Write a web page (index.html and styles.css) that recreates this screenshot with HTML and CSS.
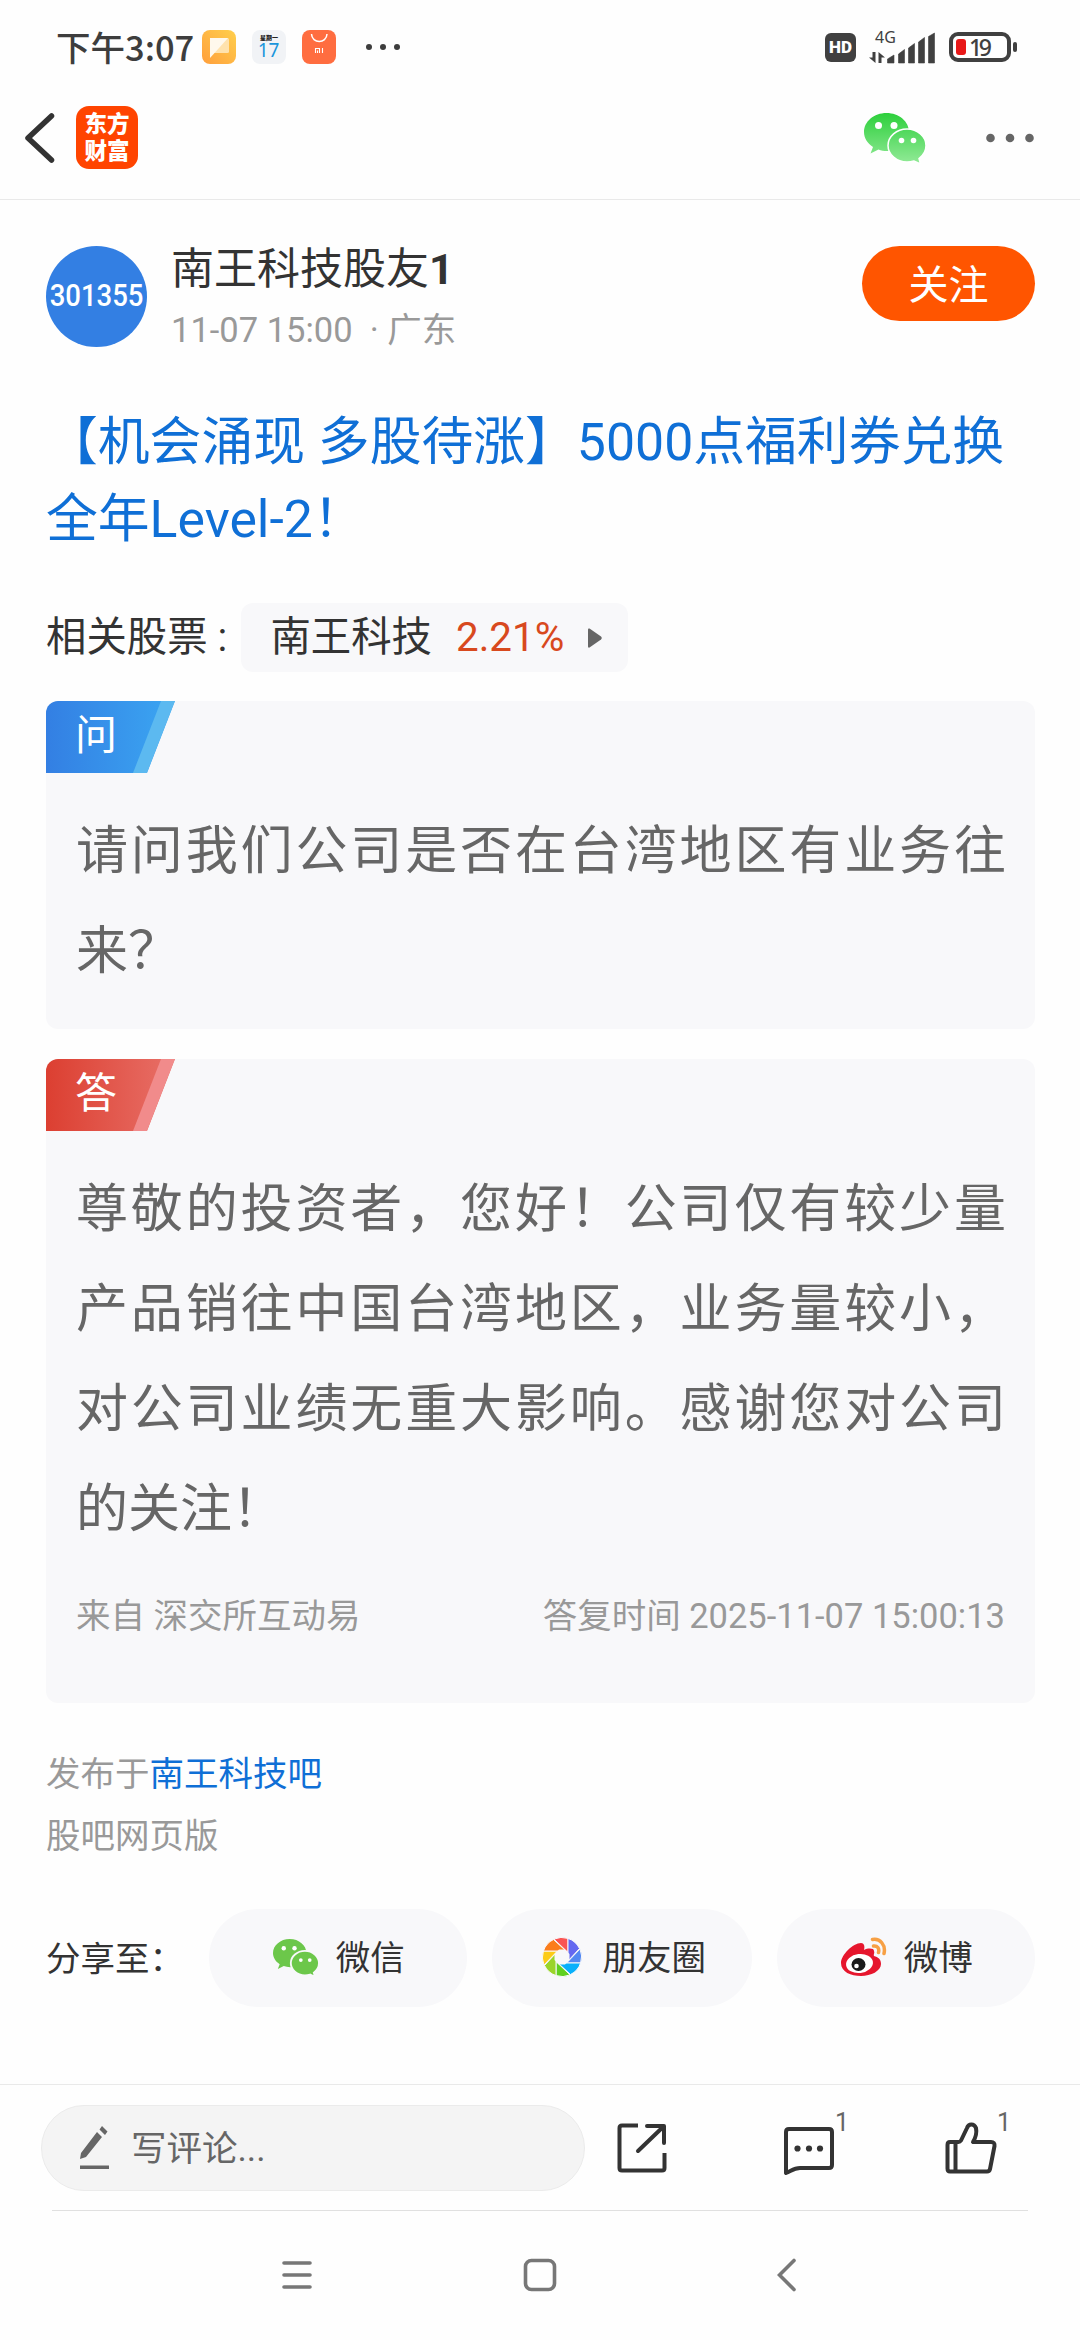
FILE: index.html
```html
<!DOCTYPE html>
<html lang="zh-CN">
<head>
    <meta charset="UTF-8">
    <title>南王科技吧</title>
    <link rel="stylesheet" href="styles.css">
</head>
<body>

    <!-- status bar -->
    <div class="status-bar">
        <span class="time">下午3:07</span>
        <div class="app-icons">
            <svg width="34" height="34" viewBox="0 0 34 34">
                <defs><linearGradient id="note" x1="0" y1="1" x2="1" y2="0"><stop offset="0" stop-color="#ff9f3c"/><stop offset="1" stop-color="#ffcf4c"/></linearGradient></defs>
                <rect width="34" height="34" rx="8" fill="url(#note)"/>
                <rect x="8" y="8" width="19" height="15" rx="1.5" fill="#ffe2ad"/>
                <path d="M8 8H26L8 28Z" fill="#fff8ec"/>
            </svg>
            <svg width="34" height="34" viewBox="0 0 34 34">
                <rect width="34" height="34" rx="8" fill="#f1f3f6"/>
                <text x="17" y="10" class="cal-week">星期一</text>
                <text x="16.5" y="27" class="cal-day">17</text>
            </svg>
            <svg width="34" height="34" viewBox="0 0 34 34">
                <rect width="34" height="34" rx="8" fill="#ff6d40"/>
                <path d="M9.5 4C10 14 24.5 14 25 4" fill="none" stroke="#fff" stroke-width="1.5"/>
                <path d="M13.5 23V18.5H17.5V23M15.5 20.5V23M20.5 18V23" fill="none" stroke="#fff" stroke-width="1.1"/>
            </svg>
        </div>
        <svg class="status-dots" width="36" height="8" viewBox="0 0 36 8" fill="#3d3d3d"><circle cx="4" cy="4" r="3"/><circle cx="18" cy="4" r="3"/><circle cx="32" cy="4" r="3"/></svg>
        <div class="status-right">
            <span class="hd">HD</span>
            <svg width="67" height="38" viewBox="0 0 67 38" fill="#404040">
                <text x="6" y="14.5" class="net">4G</text>
                <path d="M6.5 24V35L0 29.5H3.5V24ZM9.500 35V24L16 29.500H12.500V35Z"/>
                <path d="M18.500 35V31L25 27V35ZM29.500 35V26L35.500 21.500V35ZM39.500 35V20L45.500 15.500V35ZM49.500 35V14L55.500 9.500V35ZM59.500 35V8.500L65.500 5V35Z" stroke="#404040" stroke-width=".6" stroke-linejoin="round"/>
            </svg>
            <svg width="68" height="32" viewBox="0 0 68 32">
                <rect x="2" y="3" width="58" height="26" rx="7" fill="none" stroke="#404040" stroke-width="4"/>
                <rect x="7" y="8" width="10" height="16" rx="3" fill="#e81818"/>
                <rect x="64" y="11" width="4" height="10" rx="2" fill="#404040"/>
                <text x="20" y="24.5" class="battery-num" textLength="23">19</text>
            </svg>
        </div>
    </div>

    <!-- top bar -->
    <header class="top-bar">
        <svg class="back" width="30" height="52" viewBox="0 0 30 52" fill="none" stroke="#333" stroke-width="5.5" stroke-linecap="round" stroke-linejoin="round"><path d="M26.5 4L3 26L26.5 48"/></svg>
        <div class="logo"><span>东方</span><span>财富</span></div>
        <svg class="wechat-top" width="62" height="52" viewBox="0 0 62 52">
            <defs><linearGradient id="wx" gradientUnits="userSpaceOnUse" x1="0" y1="0" x2="0" y2="52"><stop offset="0" stop-color="#2bcf3a"/><stop offset="1" stop-color="#93ea98"/></linearGradient></defs>
            <path d="M22.5 1C10 1 0 9.5 0 20C0 26 3.5 31.5 9 35L6.5 41.5L14.5 37.5C17 38.5 20 39 23 39C35 39 45 30.5 45 20S35 1 22.5 1Z" fill="url(#wx)"/>
            <path d="M43 17C32.500 17 24 24.500 24 33.500S32.500 50 43 50C45.500 50 47.500 49.700 50 49L56.500 52L55 46.500C59 43.500 62 39 62 33.500C62 24.500 53.500 17 43 17Z" fill="url(#wx)" stroke="#fff" stroke-width="1.5"/>
            <g fill="#fff"><circle cx="14.5" cy="13.5" r="3.5"/><circle cx="30" cy="13.5" r="3.5"/><circle cx="37.5" cy="28.5" r="2.8"/><circle cx="49.5" cy="28.5" r="2.8"/></g>
        </svg>
        <svg width="48" height="10" viewBox="0 0 48 10" fill="#666"><circle cx="4.5" cy="5" r="4.3"/><circle cx="24" cy="5" r="4.3"/><circle cx="43.5" cy="5" r="4.3"/></svg>
    </header>

    <main class="post">
        <div class="author">
            <div class="avatar"><span>301355</span></div>
            <div class="author-info">
                <div class="name">南王科技股友<b>1</b></div>
                <div class="meta">11-07 15:00 &nbsp;· 广东</div>
            </div>
            <button class="follow">关注</button>
        </div>

        <h1 class="title">【机会涌现 多股待涨】5000点福利券兑换全年Level-2！</h1>

        <div class="stocks">
            <span>相关股票 :</span>
            <div class="stock">
                <span>南王科技</span>
                <span class="rate">2.21%</span>
                <svg width="14" height="20" viewBox="0 0 14 20"><path d="M0 1.500Q0 0 1.500 .5L13 8.500Q14.500 10 13 11.500L1.500 19.500Q0 20 0 18.500Z" fill="#666"/></svg>
            </div>
        </div>

        <section class="card">
            <div class="tag ask"><span>问</span></div>
            <p>请问我们公司是否在台湾地区有业务往来？</p>
        </section>

        <section class="card answer-card">
            <div class="tag answer"><span>答</span></div>
            <p>尊敬的投资者，您好！公司仅有较少量产品销往中国台湾地区，业务量较小，对公司业绩无重大影响。感谢您对公司的关注！</p>
            <div class="source">
                <span>来自 深交所互动易</span>
                <span>答复时间 2025-11-07 15:00:13</span>
            </div>
        </section>

        <div class="from">
            <div>发布于<a>南王科技吧</a></div>
            <div>股吧网页版</div>
        </div>

        <div class="share">
            <span class="share-label">分享至：</span>
            <div class="share-btn">
                <svg width="46" height="39" viewBox="0 0 62 52">
                    <path d="M22.5 1C10 1 0 9.5 0 20C0 26 3.5 31.5 9 35L6.5 41.5L14.5 37.5C17 38.5 20 39 23 39C35 39 45 30.5 45 20S35 1 22.5 1Z" fill="#6cc74a"/>
                    <path d="M43 17C32.500 17 24 24.500 24 33.500S32.500 50 43 50C45.500 50 47.500 49.700 50 49L56.500 52L55 46.500C59 43.500 62 39 62 33.500C62 24.500 53.500 17 43 17Z" fill="#6cc74a" stroke="#f8f8fa" stroke-width="2.5"/>
                    <g fill="#fff"><circle cx="14.5" cy="13.5" r="3"/><circle cx="29" cy="13.5" r="3"/><circle cx="37.5" cy="29.5" r="2.5"/><circle cx="49.5" cy="29.5" r="2.5"/></g>
                </svg>
                <span>微信</span>
            </div>
            <div class="share-btn moments">
                <svg width="40" height="40" viewBox="-20 -20 40 40">
                    <g stroke="#f8f8fa" stroke-width="1">
                        <path d="M-8 -17.900A19.500 19.500 0 0 1 6 -18.600V-4.500Z" fill="#fa5452"/>
                        <path d="M6 -18.600A19.500 19.500 0 0 1 17.500 -8.500L6 4Z" fill="#6468f0"/>
                        <path d="M18 -8A19.500 19.500 0 0 1 18.600 6H4.500Z" fill="#5288f2"/>
                        <path d="M18.600 6A19.500 19.500 0 0 1 8.500 17.500L-4 6Z" fill="#08b0fb"/>
                        <path d="M8 17.900A19.500 19.500 0 0 1 -6 18.600V4.500Z" fill="#60d020"/>
                        <path d="M-6 18.600A19.500 19.500 0 0 1 -17.500 8.500L-6 -4Z" fill="#9ad42a"/>
                        <path d="M-18 8A19.500 19.500 0 0 1 -18.600 -6H-4.500Z" fill="#fccb17"/>
                        <path d="M-18.600 -6A19.500 19.500 0 0 1 -8.500 -17.500L4 -6Z" fill="#fb7d1c"/>
                    </g>
                    <path d="M-3 -7.500H3L7.500 -3V3L3 7.500H-3L-7.500 3V-3Z" fill="#f8f8fa"/>
                </svg>
                <span>朋友圈</span>
            </div>
            <div class="share-btn">
                <svg width="46" height="40" viewBox="0 0 46 40">
                    <path d="M20 6C23 6 24 9 23 13C27 11 33 11 33 14C34 16 32 18 33 19C37 20 40 22 40 27C40 34 30 39 20 39S0 35 0 26C0 18 12 6 20 6Z" fill="#e6162d"/>
                    <ellipse cx="18.5" cy="26.5" rx="13.5" ry="9.5" transform="rotate(-7 18.5 26.5)" fill="#fff"/>
                    <ellipse cx="17.5" cy="27.5" rx="7" ry="6.5" fill="#1b1b1b"/>
                    <circle cx="15.5" cy="29" r="2.3" fill="#fff"/>
                    <path d="M31.5 2.5C39 1 45 8 43 16.5M32.5 9C36.5 8.5 38.5 11.5 37.5 15.5" fill="none" stroke="#f7a044" stroke-width="3.5" stroke-linecap="round"/>
                </svg>
                <span>微博</span>
            </div>
        </div>
    </main>

    <!-- comment bar -->
    <footer class="comment-bar">
        <div class="comment-input">
            <svg width="30" height="46" viewBox="0 0 30 46" fill="#666"><path d="M0 35L1 29L17 8L22 13L6 33ZM19.500 5.500L22 2L27.500 7.500L25 11ZM0 41.500H29V45H0Z"/></svg>
            <span>写评论...</span>
        </div>
        <div class="actions">
            <svg width="50" height="50" viewBox="0 0 50 50" fill="none" stroke="#333" stroke-width="4"><path d="M21 2.500H5Q2.500 2.500 2.500 5V45Q2.500 47.500 5 47.500H45Q47.500 47.500 47.500 45V30"/><path d="M30 3H47V20M46 4L21 28" stroke-linecap="round" stroke-linejoin="round"/></svg>
            <div class="action comment">
                <svg width="52" height="54" viewBox="0 -5 52 54"><path d="M6 3H46Q49 3 49 6V39Q49 42 46 42H17C11 42 8 45 3 47V6Q3 3 6 3Z" fill="none" stroke="#333" stroke-width="4" stroke-linejoin="round"/><g fill="#333"><circle cx="14.5" cy="22.5" r="3.1"/><circle cx="26" cy="22.5" r="3.1"/><circle cx="37" cy="22.5" r="3.1"/></g></svg>
                <span class="count">1</span>
            </div>
            <div class="action like">
                <svg width="52" height="54" viewBox="0 0 52 54" fill="none" stroke="#333" stroke-width="4" stroke-linejoin="round"><path d="M5 21H13.500Q15 21 16 19.500L22 7C23.500 2.500 29 2 31 7C32 12 31 16 28 21H46Q50 21 49.500 25L45 48Q44.500 50.500 42 50.500H5Q2.500 50.500 2.500 47.500V24Q2.500 21 5 21ZM10.500 21V50"/></svg>
                <span class="count">1</span>
            </div>
        </div>
    </footer>

    <!-- system navigation -->
    <nav class="sys-nav">
        <svg width="30" height="32" viewBox="0 0 30 32" stroke="#777" stroke-width="3.6" stroke-linecap="round"><path d="M2 4H28M2 16H28M2 28H28"/></svg>
        <svg class="home" width="34" height="34" viewBox="0 0 34 34"><rect x="2.5" y="2.5" width="29" height="29" rx="6" fill="none" stroke="#777" stroke-width="3.6"/></svg>
        <svg width="20" height="34" viewBox="0 0 20 34" fill="none" stroke="#777" stroke-width="3.6" stroke-linecap="round"><path d="M17 2.500L2.500 17L17 31.500"/></svg>
    </nav>

</body>
</html>
```

FILE: styles.css
```css
* {
    box-sizing: border-box;
}

body {
    margin: 0;
    width: 1080px;
    height: 2340px;
    overflow: hidden;
    display: flex;
    flex-direction: column;
    background-color: #fefefe;
    color: #333;
    font-family: Roboto, "Noto Sans CJK SC", sans-serif;
}

svg {
    display: block;
    flex: none;
}

/* status bar */
.status-bar {
    height: 94px;
    padding: 0 63px 0 56px;
    display: flex;
    align-items: center;
    flex: none;
}

.time {
    width: 146px;
    padding-bottom: 2px;
    font: 500 34.5px/40px "Noto Sans CJK SC", sans-serif;
    color: #3d3d3d;
    white-space: nowrap;
}

.app-icons {
    display: flex;
    gap: 16px;
}

.cal-week {
    font: 900 6px "Noto Sans CJK SC", sans-serif;
    text-anchor: middle;
    fill: #222;
}

.cal-day {
    font: 19px "Noto Sans", sans-serif;
    text-anchor: middle;
    fill: #1a96dc;
}

.status-dots {
    margin-left: 29px;
}

.status-right {
    margin-left: auto;
    display: flex;
    align-items: center;
}

.hd {
    width: 31px;
    height: 29px;
    margin-right: 13px;
    border-radius: 6px;
    background: #404040;
    color: #fff;
    font: 900 17px/29px Roboto, sans-serif;
    text-align: center;
}

.net {
    font: 16px "Noto Sans", sans-serif;
}

.battery-num {
    font: 500 23px "Noto Sans", sans-serif;
    fill: #404040;
}

.status-right svg + svg {
    margin-left: 13px;
}

/* top bar */
.top-bar {
    height: 106px;
    padding: 0 46px 18px 25px;
    display: flex;
    align-items: center;
    border-bottom: 1px solid #e9e9e9;
    flex: none;
}

.logo {
    width: 62px;
    height: 63px;
    margin-left: 21px;
    padding-bottom: 4px;
    border-radius: 13px;
    background: #ff4400;
    color: #fff;
    display: flex;
    flex-direction: column;
    align-items: center;
    justify-content: center;
    font: 900 22.5px/27px "Noto Sans CJK SC", sans-serif;
}

.wechat-top {
    margin-left: auto;
    margin-right: 60px;
}

/* post */
.post {
    flex: 1;
    padding: 46px 45px 0 46px;
}

.author {
    height: 102px;
    display: flex;
    align-items: flex-start;
}

.avatar {
    width: 101px;
    height: 101px;
    border-radius: 50%;
    background: #337fe3;
    color: #fff;
    display: flex;
    align-items: center;
    justify-content: center;
    font: 500 32px/1 Roboto, sans-serif;
    padding-bottom: 4px;
}

/* the stock code is set narrow inside the circle */
.avatar span {
    transform: scaleX(.86);
}

.author-info {
    margin-left: 24px;
    padding-top: 1px;
}

.name {
    height: 60px;
    font-size: 43px;
    line-height: 44px;
}

.meta {
    font-size: 34.5px;
    line-height: 46px;
    color: #999;
}

.follow {
    margin-left: auto;
    width: 173px;
    height: 75px;
    padding: 0 0 4px;
    border: none;
    border-radius: 38px;
    background: #ff5500;
    color: #fff;
    font-family: inherit;
    font-size: 40px;
}

.title {
    margin: 56px 0 0;
    font-size: 51.8px;
    font-weight: 400;
    line-height: 77px;
    color: #0f6fd6;
}

.stocks {
    height: 69px;
    margin-top: 45px;
    display: flex;
    align-items: center;
    gap: 14px;
    font-size: 40.4px;
    line-height: 67px;
}

.stock {
    width: 387px;
    height: 69px;
    padding-left: 29px;
    border-radius: 12px;
    background: #f8f8fa;
    display: flex;
    align-items: center;
    gap: 24px;
}

.rate {
    color: #d8491e;
}

/* question and answer cards */
.card {
    height: 328px;
    margin-top: 29px;
    border-radius: 12px;
    background: #f8f8fa;
    overflow: hidden;
}

.tag {
    width: 129px;
    height: 72px;
    padding-left: 29px;
    display: flex;
    color: #fff;
    font-size: 42px;
    line-height: 69px;
    clip-path: polygon(0 0, 100% 0, 101px 100%, 0 100%);
}

/* lighter slanted edge */
.tag::after {
    content: "";
    width: 43px;
    margin-left: auto;
    clip-path: polygon(29px 0, 100% 0, 15px 100%, 1px 100%);
}

.ask {
    background: linear-gradient(90deg, #337fe3, #3ba6f2);
}

.ask::after {
    background: #5cb9f0;
}

.answer {
    background: linear-gradient(90deg, #dc3f31, #e87068);
}

.answer::after {
    background: #f18b8b;
}

.card p {
    margin: 29px 29px 0 30px;
    font-size: 52px;
    line-height: 100px;
    color: #666;
    text-align: justify;
}

.answer-card {
    height: 644px;
    margin-top: 30px;
}

.source {
    margin: 30px 30px 0;
    display: flex;
    justify-content: space-between;
    font-size: 34.5px;
    line-height: 52px;
    color: #999;
}

.from {
    margin-top: 40px;
    font-size: 34.5px;
    line-height: 62px;
    color: #999;
}

.from a {
    color: #0f6fd6;
}

/* share row */
.share {
    margin-top: 42px;
    display: flex;
    align-items: center;
    gap: 24.5px;
    font-size: 34.5px;
}

.share span {
    padding-bottom: 5px;
}

.share-label {
    width: 138px;
    white-space: nowrap;
}

.share-btn {
    flex: 1;
    height: 98px;
    padding: 0 0 2px 2px;
    border-radius: 49px;
    background: #f8f8fa;
    display: flex;
    align-items: center;
    justify-content: center;
    gap: 17px;
}

.moments {
    padding-left: 4px;
    gap: 21px;
}

/* comment bar */
.comment-bar {
    height: 126px;
    padding: 0 0 0 41px;
    border-top: 1px solid #e9e9e9;
    display: flex;
    align-items: center;
    flex: none;
}

.comment-input {
    width: 544px;
    height: 86px;
    padding-left: 38px;
    border: 1px solid #ebebeb;
    border-radius: 43px;
    background: #f4f4f4;
    color: #666;
    display: flex;
    align-items: center;
    gap: 21px;
    font-size: 35.5px;
}

.comment-input svg {
    margin-bottom: 2px;
}

.comment-input span {
    padding-bottom: 5px;
}

.actions {
    margin-left: 32px;
    display: flex;
    align-items: center;
}

.action {
    position: relative;
}

.comment {
    margin-left: 116px;
}

.like {
    margin-left: 110px;
}

.count {
    position: absolute;
    left: 52px;
    top: -13px;
    font-size: 25px;
    color: #666;
}

/* system navigation */
.sys-nav {
    height: 130px;
    margin: 0 52px;
    padding: 0 0 2px 230px;
    border-top: 1px solid #e0e0e0;
    display: flex;
    align-items: center;
    flex: none;
}

.home {
    margin: 0 220px 0 211px;
}
```
